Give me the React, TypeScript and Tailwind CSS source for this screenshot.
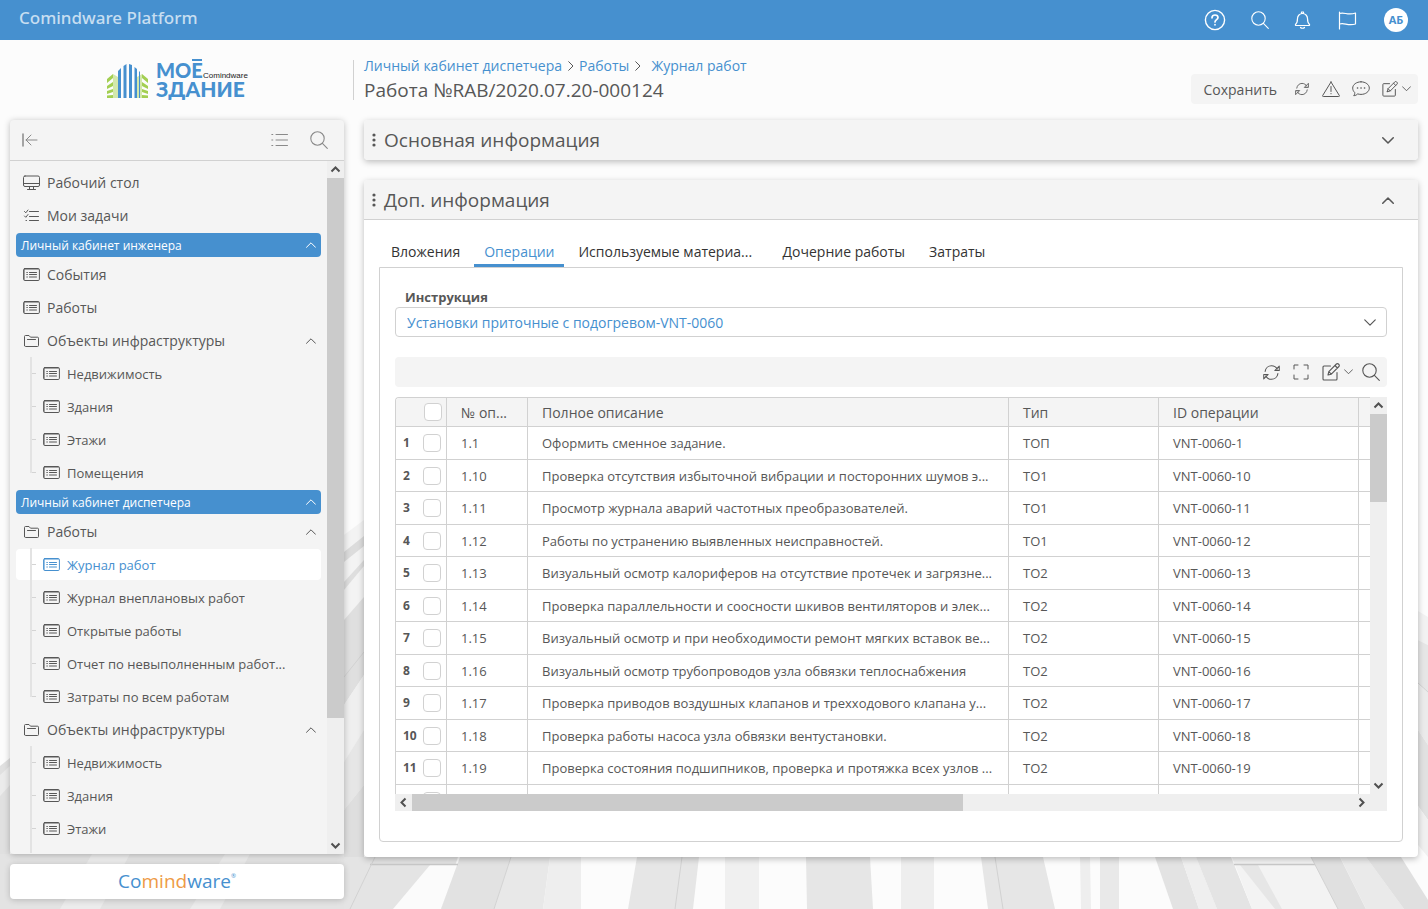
import { useState } from "react";
import type { ReactNode } from "react";

interface MenuItem {
  label: string;
  icon: "desktop" | "tasks" | "list" | "folder";
  children?: string[];
  more?: boolean;
}

interface MenuGroup {
  title: string;
  items: MenuItem[];
}

const topItems: MenuItem[] = [
  { label: "Рабочий стол", icon: "desktop" },
  { label: "Мои задачи", icon: "tasks" },
];

const groups: MenuGroup[] = [
  {
    title: "Личный кабинет инженера",
    items: [
      { label: "События", icon: "list" },
      { label: "Работы", icon: "list" },
      { label: "Объекты инфраструктуры", icon: "folder", children: ["Недвижимость", "Здания", "Этажи", "Помещения"] },
    ],
  },
  {
    title: "Личный кабинет диспетчера",
    items: [
      {
        label: "Работы",
        icon: "folder",
        children: [
          "Журнал работ",
          "Журнал внеплановых работ",
          "Открытые работы",
          "Отчет по невыполненным работ...",
          "Затраты по всем работам",
        ],
      },
      { label: "Объекты инфраструктуры", icon: "folder", children: ["Недвижимость", "Здания", "Этажи"], more: true },
    ],
  },
];

const tabs = ["Вложения", "Операции", "Используемые материа...", "Дочерние работы", "Затраты"];

const rows = [
  { num: "1.1", text: "Оформить сменное задание.", type: "ТОП", id: "VNT-0060-1" },
  { num: "1.10", text: "Проверка отсутствия избыточной вибрации и посторонних шумов э...", type: "ТО1", id: "VNT-0060-10" },
  { num: "1.11", text: "Просмотр журнала аварий частотных преобразователей.", type: "ТО1", id: "VNT-0060-11" },
  { num: "1.12", text: "Работы по устранению выявленных неисправностей.", type: "ТО1", id: "VNT-0060-12" },
  { num: "1.13", text: "Визуальный осмотр калориферов на отсутствие протечек и загрязне...", type: "ТО2", id: "VNT-0060-13" },
  { num: "1.14", text: "Проверка параллельности и соосности шкивов вентиляторов и элек...", type: "ТО2", id: "VNT-0060-14" },
  { num: "1.15", text: "Визуальный осмотр и при необходимости ремонт мягких вставок ве...", type: "ТО2", id: "VNT-0060-15" },
  { num: "1.16", text: "Визуальный осмотр трубопроводов узла обвязки теплоснабжения", type: "ТО2", id: "VNT-0060-16" },
  { num: "1.17", text: "Проверка приводов воздушных клапанов и трехходового клапана у...", type: "ТО2", id: "VNT-0060-17" },
  { num: "1.18", text: "Проверка работы насоса узла обвязки вентустановки.", type: "ТО2", id: "VNT-0060-18" },
  { num: "1.19", text: "Проверка состояния подшипников, проверка и протяжка всех узлов ...", type: "ТО2", id: "VNT-0060-19" },
  { num: "", text: "", type: "", id: "" },
];

function Svg({ w, h, sw = 1, className = "", children }: { w: number; h: number; sw?: number; className?: string; children: ReactNode }) {
  return (
    <svg
      width={w}
      height={h}
      viewBox={`0 0 ${w} ${h}`}
      fill="none"
      stroke="currentColor"
      strokeWidth={sw}
      strokeLinecap="round"
      strokeLinejoin="round"
      className={`shrink-0 ${className}`}
      aria-hidden="true"
    >
      {children}
    </svg>
  );
}

const SearchIcon = () => (
  <Svg w={18} h={18} sw={1.1}>
    <circle cx="7.5" cy="7.5" r="6.7" />
    <path d="M12.4 12.4 17.3 17.3" />
  </Svg>
);

const RefreshIcon = ({ size = 16 }: { size?: number }) => (
  <svg width={size} height={size} viewBox="0 0 16 16" fill="none" stroke="currentColor" strokeLinecap="round" strokeLinejoin="round" aria-hidden="true">
    <path d="M2 7C2.4 3.8 5 1.6 8 1.6c2.4 0 4.4 1.3 5.4 3.2" />
    <path d="M15.3 2v4.2h-4.2Z" />
    <path d="M14 9c-.4 3.2-3 5.4-6 5.4-2.4 0-4.4-1.3-5.4-3.2" />
    <path d="M.7 14V9.8h4.2Z" />
  </svg>
);

const EditIcon = ({ size = 18 }: { size?: number }) => (
  <svg width={size} height={size} viewBox="0 0 18 18" fill="none" stroke="currentColor" strokeWidth={1.1} strokeLinecap="round" strokeLinejoin="round" aria-hidden="true">
    <path d="M8.5 3H2a1 1 0 0 0-1 1v12a1 1 0 0 0 1 1h12a1 1 0 0 0 1-1V9.5" />
    <path d="M6 12l.8-3.3L14.4 1a1.4 1.4 0 0 1 2 0l.5.5a1.4 1.4 0 0 1 0 2l-7.6 7.7L6 12ZM13 2.5 15.4 5M6.8 8.7l2.5 2.5" />
  </svg>
);

const ChevronIcon = ({ up = false, w = 10, sw = 1 }: { up?: boolean; w?: number; sw?: number }) => (
  <svg width={w} height={w / 2 + 1} viewBox="0 0 10 6" fill="none" stroke="currentColor" strokeWidth={sw} strokeLinecap="round" strokeLinejoin="round" aria-hidden="true">
    <path d={up ? "M.5 5.3 5 .8l4.5 4.5" : "M.5.7 5 5.2 9.5.7"} />
  </svg>
);

const ListIcon = () => (
  <Svg w={17} h={13}>
    <rect x=".6" y=".5" width="15.8" height="12" rx="1.2" />
    <path d="M1.5 1.5h14M1.5 1.5v10" strokeOpacity=".5" />
    <path d="M6.5 4.5h7M6.5 6.5h7M6.5 9h7" />
    <path d="M3.8 4.5h.6M3.8 6.5h.6M3.8 9h.6" />
  </Svg>
);

const FolderIcon = () => (
  <Svg w={17} h={14}>
    <path d="M1.5 11.5v-9a1 1 0 0 1 1-1H6l1.5 1.7h7a1 1 0 0 1 1 1v7.3a1 1 0 0 1-1 1h-12a1 1 0 0 1-1-1Z" />
    <path d="M4.5 5.5h8" />
  </Svg>
);

const DesktopIcon = () => (
  <Svg w={17} h={16}>
    <rect x=".5" y="1" width="16" height="10.5" rx="1.5" />
    <path d="M1 8.5h15M6.5 11.7v2.5M10.5 11.7v2.5M4.5 14.5h8" />
  </Svg>
);

const TasksIcon = () => (
  <Svg w={17} h={14}>
    <path d="M6.5 2.5h9M6.5 7.5h9M6.5 11.5h9M1.5 2.5l1.3 1.3L5 1M1.5 7l1.3 1.3L5 5.5M3 11.5h.5" />
  </Svg>
);

const menuIcons = { desktop: <DesktopIcon />, tasks: <TasksIcon />, list: <ListIcon />, folder: <FolderIcon /> };

// bold arrow heads at the ends of the scroll bars
const ScrollArrow = ({ dir }: { dir: "up" | "down" | "left" | "right" }) => {
  const paths = {
    up: "M4.5 10.5 8.5 6.5l4 4",
    down: "M4.5 6.5l4 4 4-4",
    left: "M10.5 4.5l-4 4 4 4",
    right: "M6.5 4.5l4 4-4 4",
  };
  return (
    <button type="button" aria-label={dir} className="size-[17px] shrink-0 bg-[#efefef] text-[#505050]">
      <Svg w={17} h={17} sw={2}>
        <path d={paths[dir]} strokeLinecap="butt" strokeLinejoin="miter" />
      </Svg>
    </button>
  );
};

function Background() {
  const planks: [string, string][] = [
    ["0,766 10,758 10,909 0,909", "#e0e0e0"],
    ["0,775 10,766 10,785 0,796", "#ebebeb"],
    ["0,854 344,854 344,909 0,909", "#e3e3e3"],
    ["60,909 92,854 130,854 100,909", "#ececec"],
    ["190,909 225,854 250,854 220,909", "#ececec"],
    ["344,535 364,520 364,909 344,909", "#f3f3f3"],
    ["344,552 364,536 364,546 344,562", "#dcdcdc"],
    ["344,582 364,560 364,566 344,590", "#dedede"],
    ["344,620 364,597 364,675 344,705", "#dfdfdf"],
    ["344,705 364,675 364,730 344,762", "#efefef"],
    ["344,762 364,730 364,785 344,810", "#e6e6e6"],
    ["344,810 364,785 364,909 344,909", "#dedede"],
    ["1418,611 1428,617 1428,645 1418,640", "#f2f2f2"],
    ["1418,640 1428,645 1428,692 1418,684", "#e6e6e6"],
    ["1418,684 1428,692 1428,745 1418,730", "#ebebeb"],
    ["1418,730 1428,745 1428,820 1418,806", "#e1e1e1"],
    ["1418,806 1428,820 1428,857 1418,845", "#f0f0f0"],
    ["344,857 458,857 441,909 344,909", "#e4e4e4"],
    ["430,865 458,865 441,909 393,909", "#fbfbfb"],
    ["460,857 511,857 494,909 441,909", "#e2e2e2"],
    ["511,857 550,857 543,909 494,909", "#e8e8e8"],
    ["550,857 581,857 581,909 543,909", "#eeeeee"],
    ["637,857 699,857 693,909 628,909", "#e6e6e6"],
    ["725,857 759,857 759,909 725,909", "#f0f0f0"],
    ["806,857 870,857 873,909 807,909", "#e6e6e6"],
    ["901,857 934,857 934,909 901,909", "#eeeeee"],
    ["981,857 1043,857 1055,909 988,909", "#e6e6e6"],
    ["1080,857 1090,857 1091,909 1081,909", "#eeeeee"],
    ["1100,857 1119,857 1119,909 1100,909", "#e9e9e9"],
    ["1155,857 1181,857 1199,909 1173,909", "#e3e3e3"],
    ["1181,857 1196,857 1217,909 1199,909", "#efefef"],
    ["1196,857 1231,857 1252,909 1217,909", "#e4e4e4"],
    ["1232,857 1311,857 1338,909 1252,909", "#f3f3f3"],
    ["1240,865 1258,865 1282,909 1275,909", "#e6e6e6"],
    ["1311,857 1340,857 1366,909 1338,909", "#e0e0e0"],
    ["1340,857 1366,857 1404,909 1366,909", "#eaeaea"],
    ["1366,857 1401,857 1428,900 1428,909 1404,909", "#e0e0e0"],
  ];
  return (
    <svg viewBox="0 0 1428 909" preserveAspectRatio="none" className="absolute inset-0 -z-10 size-full" aria-hidden="true">
      <rect width="1428" height="909" fill="#fcfcfc" />
      {planks.map(([points, fill]) => (
        <polygon key={points} points={points} fill={fill} />
      ))}
      <path d="M370 864.5H458M1234 864.5H1315" stroke="#c8c8c8" strokeWidth="1.5" />
      <path d="M511 857 494 909M682 857 675 909M995 857 1003 909M1311 857 1338 909M344 677 364 652M375 857 350 909M1418 683 1428 692" stroke="#d2d2d2" fill="none" />
    </svg>
  );
}

function Logo() {
  return (
    <svg width="142" height="42" viewBox="0 0 142 42" role="img" aria-label="Моё здание">
      <g fill="#a3cf52">
        <path d="M1 20 7 15v4l-6 5zM1 27l6-4v4l-6 3zM1 32l6-2v3l-6 2zM1 36.5l6-.5v3H1z" />
        <path d="M42 20l-6-5v4l6 5zM42 27l-6-4v4l6 3zM42 32l-6-2v3l6 2zM42 36.5l-6-.5v3h6z" />
      </g>
      <g fill="#d3e8ac">
        <path d="M7 15l5 3v21H7zM36 15l-5 3v21h5z" />
      </g>
      <g fill="#4690cf">
        <path d="M12 12l3-3v30h-3zM17.5 7l3-2v34h-3zM23 5l3 1v33h-3zM28.5 8l2.5 2v29h-2.5zM33 12l1 1v26h-1z" />
      </g>
      <g fill="#4690cf" fontFamily="Lato, sans-serif" fontWeight="900">
        <text x="50" y="19" fontSize="20">МОЕ</text>
        <text x="50" y="38" fontSize="21">ЗДАНИЕ</text>
        <path d="M86 0h10v2H86z" />
      </g>
      <text x="97" y="19" fontSize="8" fill="#222" fontFamily="Liberation Sans, sans-serif">Comindware</text>
    </svg>
  );
}

function TopBar() {
  return (
    <header className="flex h-10 shrink-0 items-center justify-between bg-[#4690cf] pr-5 pl-[19px] text-white">
      <span className="pb-1 font-['Noto_Sans'] text-[17px] leading-6 font-medium text-[#c7def1]">Comindware Platform</span>
      <div className="flex items-center">
        <button type="button" aria-label="Помощь" className="mr-[25px]">
          <Svg w={22} h={22} sw={1.4}>
            <circle cx="11" cy="11" r="9.6" />
            <path d="M8 8.8C8 7 9.3 6 11 6s3 1 3 2.6c0 2-3 2.2-3 4.4M11 15.5v.3" strokeWidth="1.7" />
          </Svg>
        </button>
        <button type="button" aria-label="Поиск" className="mr-[25px]">
          <SearchIcon />
        </button>
        <button type="button" aria-label="Уведомления" className="mr-[27px]">
          <Svg w={17} h={18} sw={1.2}>
            <path d="M1.5 13.5c1.8-1.5 2-3 2-6a5 5 0 0 1 10 0c0 3 .2 4.5 2 6 .3.8-.1 1-.6 1H2.1c-.5 0-.9-.2-.6-1ZM7.5 2.5V1h2v1.5M6.5 16.5c1 1 3 1 4 0" />
          </Svg>
        </button>
        <button type="button" aria-label="Флаг" className="mr-[27px]">
          <Svg w={19} h={19} sw={1.2}>
            <path d="M1.5 1v17M1.5 2.5c5-2 8 2.5 16-.5v11c-8 2.5-11-2-16 0" />
          </Svg>
        </button>
        <span className="flex size-6 items-center justify-center rounded-full bg-white text-[11px] font-bold text-[#4690cf]">АБ</span>
      </div>
    </header>
  );
}

function SubItem({ label, active, last }: { label: string; active: boolean; last: boolean }) {
  return (
    <li className="relative h-[33px] py-px">
      <a
        href="#"
        className={`flex h-[31px] items-center gap-[7px] rounded pl-[27px] text-[13px] ${active ? "bg-white text-[#4690cf]" : ""}`}
      >
        <ListIcon />
        <span className="truncate pt-[2px]">{label}</span>
      </a>
      <span className={`absolute top-0 left-[14px] w-[2px] bg-[#e3e3e3] ${last ? "h-[17px]" : "h-[41px]"}`} />
      <span className="absolute top-4 left-4 h-px w-1 bg-[#d4d4d4]" />
    </li>
  );
}

function MenuRow({ item }: { item: MenuItem }) {
  return (
    <li>
      <a href="#" className="flex h-[33px] items-center gap-[7px] pr-[5px] pl-[7px] text-sm">
        {menuIcons[item.icon]}
        <span className="flex-1">{item.label}</span>
        {item.children && <ChevronIcon up />}
      </a>
      {item.children && (
        <ul>
          {item.children.map((child, i) => (
            <SubItem
              key={child}
              label={child}
              active={child === "Журнал работ"}
              last={!item.more && i === item.children!.length - 1}
            />
          ))}
        </ul>
      )}
    </li>
  );
}

function Sidebar() {
  return (
    <aside className="flex w-[334px] shrink-0 flex-col pb-[10px]">
      <div className="flex h-20 shrink-0 items-center justify-center">
        <Logo />
      </div>
      <div className="flex min-h-0 flex-1 flex-col overflow-hidden rounded bg-[#f4f4f4] shadow-[0_1px_6px_rgba(0,0,0,0.25)]">
        <div className="flex h-[41px] shrink-0 items-center border-b border-[#d1d1d1] px-4 pl-3 text-[#8a8a8a]">
          <button type="button" aria-label="Свернуть меню" className="mr-auto">
            <Svg w={16} h={14}>
              <path d="M1 1v12" strokeWidth="1.5" />
              <path d="M15 7H4M9 2 4 7l5 5" />
            </Svg>
          </button>
          <button type="button" aria-label="Список" className="mr-[22px]">
            <Svg w={17} h={14}>
              <path d="M5 1.5h11.5M5 7h11.5M5 12.5h11.5M.8 1.5h1M.8 7h1M.8 12.5h1" />
            </Svg>
          </button>
          <button type="button" aria-label="Поиск по меню">
            <SearchIcon />
          </button>
        </div>
        <div className="flex min-h-0 flex-1">
          <nav className="min-w-0 flex-1 overflow-hidden px-[6px] pt-[5px]">
            <ul>
              {topItems.map((item) => (
                <MenuRow key={item.label} item={item} />
              ))}
            </ul>
            {groups.map((group) => (
              <section key={group.title}>
                <button type="button" className="my-px flex h-6 w-full items-center justify-between rounded bg-[#4690cf] px-[5px] text-xs text-white">
                  <span className="pt-[2px]">{group.title}</span>
                  <ChevronIcon up />
                </button>
                <ul>
                  {group.items.map((item) => (
                    <MenuRow key={item.label} item={item} />
                  ))}
                </ul>
              </section>
            ))}
          </nav>
          <div className="flex w-[17px] flex-col bg-[#efefef]">
            <ScrollArrow dir="up" />
            <div className="flex flex-1 flex-col">
              <div className="h-[82%] bg-[#cbcbcb]" />
            </div>
            <ScrollArrow dir="down" />
          </div>
        </div>
      </div>
      <div className="mt-[10px] flex h-[35px] shrink-0 items-center justify-center rounded bg-white text-[19px] text-[#4690cf] shadow-[0_1px_6px_rgba(0,0,0,0.2)]">
        <span>
          Co<span className="text-[#ee9a45]">mind</span>ware
        </span>
        <span className="self-start pt-2 text-[6px] leading-2">®</span>
      </div>
    </aside>
  );
}

const Crumb = () => (
  <Svg w={6} h={10} className="text-[#575757]">
    <path d="M.7.7 5 5 .7 9.3" />
  </Svg>
);

function PageHead() {
  return (
    <div className="flex h-20 shrink-0 items-center justify-between">
      <div className="-ml-[11px] flex h-10 flex-col border-l border-[#d1d1d1] pl-[10px]">
        <nav className="-mt-1 flex items-center text-sm text-[#4690cf]">
          <a href="#" className="mr-[6px]">Личный кабинет диспетчера</a>
          <Crumb />
          <a href="#" className="mr-[6px] ml-[5px]">Работы</a>
          <Crumb />
          <a href="#" className="ml-[10px]">Журнал работ</a>
        </nav>
        <h1 className="text-[19px] leading-7">Работа №RAB/2020.07.20-000124</h1>
      </div>
      <div className="mt-[18px] flex h-[30px] items-center rounded bg-[#f4f4f4] pr-[7px] pl-3 text-sm">
        <button type="button" className="mr-[18px] pt-[2px]">Сохранить</button>
        <button type="button" aria-label="Обновить" className="mr-[13px]">
          <RefreshIcon size={14} />
        </button>
        <button type="button" aria-label="Предупреждения" className="mr-3">
          <Svg w={18} h={16}>
            <path d="M9 1 17.3 14.5a.6.6 0 0 1-.6 1H1.3a.6.6 0 0 1-.6-1L9 1ZM9 5.5v5M9 12.5v.3" />
          </Svg>
        </button>
        <button type="button" aria-label="Комментарии" className="mr-3">
          <Svg w={18} h={16}>
            <path d="M9 .8c4.6 0 8.3 2.8 8.3 6.3S13.6 13.4 9 13.4c-1.2 0-2.3-.2-3.3-.5-1 1-2.5 1.8-4 1.8.8-.8 1.2-2 1-3.2C1.5 10.4.7 8.9.7 7.1.7 3.6 4.4.8 9 .8Z" />
            <path d="M5.5 7h.1M9 7h.1M12.5 7h.1" strokeWidth="1.6" />
          </Svg>
        </button>
        <button type="button" aria-label="Изменить" className="flex items-center gap-1">
          <EditIcon size={16} />
          <ChevronIcon w={9} />
        </button>
      </div>
    </div>
  );
}

function SectionHead({ title, open, onToggle }: { title: string; open: boolean; onToggle: () => void }) {
  return (
    <button
      type="button"
      aria-expanded={open}
      onClick={onToggle}
      className={`flex h-10 w-full shrink-0 items-center bg-[#f4f4f4] pr-6 pl-2 text-left text-[19px] leading-7 ${open ? "rounded-t border-b border-[#d1d1d1] pt-px" : "rounded"}`}
    >
      <svg width="4" height="14" viewBox="0 0 4 14" fill="currentColor" className="mr-2" aria-hidden="true">
        <circle cx="2" cy="2" r="1.6" />
        <circle cx="2" cy="7" r="1.6" />
        <circle cx="2" cy="12" r="1.6" />
      </svg>
      <span className="flex-1">{title}</span>
      <ChevronIcon up={open} w={12} sw={1.3} />
    </button>
  );
}

const checkbox = "block size-[18px] appearance-none rounded border border-[#d1d1d1] bg-white checked:bg-[#4690cf]";
const cell = "overflow-hidden border-r border-b border-[#d1d1d1] px-[14px] text-left font-normal whitespace-nowrap";

function Operations() {
  return (
    <div className="flex min-h-0 flex-1 flex-col">
      <div className="flex min-h-0 flex-1">
        <div className="min-w-0 flex-1 overflow-hidden rounded-tl border-t border-l border-[#d1d1d1]">
          <table className="w-full table-fixed border-separate border-spacing-0 text-[13px] leading-5">
            <colgroup>
              <col className="w-[51px]" />
              <col className="w-[81px]" />
              <col />
              <col className="w-[150px]" />
              <col className="w-[200px]" />
              <col className="w-[11px]" />
            </colgroup>
            <thead>
              <tr className="h-[29px] bg-[#f4f4f4] text-sm">
                <th className="border-r border-b border-[#d1d1d1] p-0">
                  <input type="checkbox" aria-label="Выбрать все" className={`${checkbox} ml-7`} />
                </th>
                <th className={`${cell} pt-[2px]`}>№ оп...</th>
                <th className={`${cell} pt-[2px]`}>Полное описание</th>
                <th className={`${cell} pt-[2px]`}>Тип</th>
                <th className={`${cell} pt-[2px]`}>ID операции</th>
                <th className="border-b border-[#d1d1d1]" />
              </tr>
            </thead>
            <tbody>
              {rows.map((row, i) => (
                <tr key={i} className="odd:h-[33px] even:h-8">
                  <td className="border-r border-b border-[#d1d1d1] p-0">
                    <label className="flex items-center">
                      <span className="w-[27px] pl-[7px] text-xs leading-5 font-bold">{row.num && i + 1}</span>
                      <input type="checkbox" className={checkbox} />
                    </label>
                  </td>
                  <td className={cell}>{row.num}</td>
                  <td className={cell}>{row.text}</td>
                  <td className={cell}>{row.type}</td>
                  <td className={cell}>{row.id}</td>
                  <td className="border-b border-[#d1d1d1]" />
                </tr>
              ))}
            </tbody>
          </table>
        </div>
        <div className="flex w-[17px] flex-col bg-[#efefef]">
          <ScrollArrow dir="up" />
          <div className="flex-1">
            <div className="h-[88px] bg-[#cbcbcb]" />
          </div>
          <ScrollArrow dir="down" />
        </div>
      </div>
      <div className="flex h-[17px] shrink-0 bg-[#efefef] pr-[17px]">
        <ScrollArrow dir="left" />
        <div className="flex-1">
          <div className="h-full w-[551px] bg-[#cbcbcb]" />
        </div>
        <ScrollArrow dir="right" />
      </div>
    </div>
  );
}

export default function App() {
  const [tab, setTab] = useState(1);
  const [mainOpen, setMainOpen] = useState(false);
  const [extraOpen, setExtraOpen] = useState(true);

  return (
    <div className="relative isolate flex h-screen flex-col overflow-hidden font-['Open_Sans',sans-serif] text-[#575757]">
      <Background />
      <TopBar />
      <div className="flex min-h-0 flex-1 gap-5 px-[10px]">
        <Sidebar />
        <main className="flex min-w-0 flex-1 flex-col pb-[52px]">
          <PageHead />
          <section className="mb-5 shrink-0 rounded shadow-[0_2px_6px_rgba(0,0,0,0.25)]">
            <SectionHead title="Основная информация" open={mainOpen} onToggle={() => setMainOpen(!mainOpen)} />
          </section>
          <section className="flex min-h-0 flex-1 flex-col rounded bg-white shadow-[0_2px_6px_rgba(0,0,0,0.25)]">
            <SectionHead title="Доп. информация" open={extraOpen} onToggle={() => setExtraOpen(!extraOpen)} />
            <div role="tablist" className="mx-[15px] flex h-[47px] shrink-0 items-end gap-1 pl-[2px] text-sm text-[#333]">
              {tabs.map((name, i) => (
                <button
                  key={name}
                  type="button"
                  role="tab"
                  aria-selected={i === tab}
                  onClick={() => setTab(i)}
                  className={`h-[30px] border-b-3 px-[10px] pt-[2px] text-left whitespace-nowrap ${i === 2 ? "w-[200px]" : ""} ${i === tab ? "border-[#4690cf] text-[#4690cf]" : "border-transparent"}`}
                >
                  {name}
                </button>
              ))}
            </div>
            <div className="mx-[15px] mb-[15px] flex min-h-0 flex-1 flex-col rounded-b border border-[#d1d1d1] px-[15px] pb-[30px]">
              <label htmlFor="instruction" className="mt-5 pl-[10px] text-[13px] leading-[19px] font-bold">
                Инструкция
              </label>
              <div className="relative shrink-0">
                <select
                  id="instruction"
                  className="h-[30px] w-full appearance-none rounded border border-[#d1d1d1] bg-white px-[11px] pt-[2px] text-sm text-[#4690cf]"
                >
                  <option>Установки приточные с подогревом-VNT-0060</option>
                </select>
                <span className="pointer-events-none absolute inset-y-0 right-[11px] flex items-center">
                  <ChevronIcon w={12} />
                </span>
              </div>
              <div className="mt-5 mb-[10px] flex h-[30px] shrink-0 items-center justify-end rounded bg-[#f4f4f4] pr-[7px]">
                <button type="button" aria-label="Обновить список" className="mr-[13px]">
                  <RefreshIcon size={17} />
                </button>
                <button type="button" aria-label="На весь экран" className="mr-[13px]">
                  <Svg w={16} h={16}>
                    <path d="M1 5V1h4M11 1h4v4M15 11v4h-4M5 15H1v-4" />
                  </Svg>
                </button>
                <button type="button" aria-label="Изменить список" className="mr-[9px] flex items-center gap-1">
                  <EditIcon />
                  <ChevronIcon w={9} />
                </button>
                <button type="button" aria-label="Поиск в списке">
                  <SearchIcon />
                </button>
              </div>
              <Operations />
            </div>
          </section>
        </main>
      </div>
    </div>
  );
}
